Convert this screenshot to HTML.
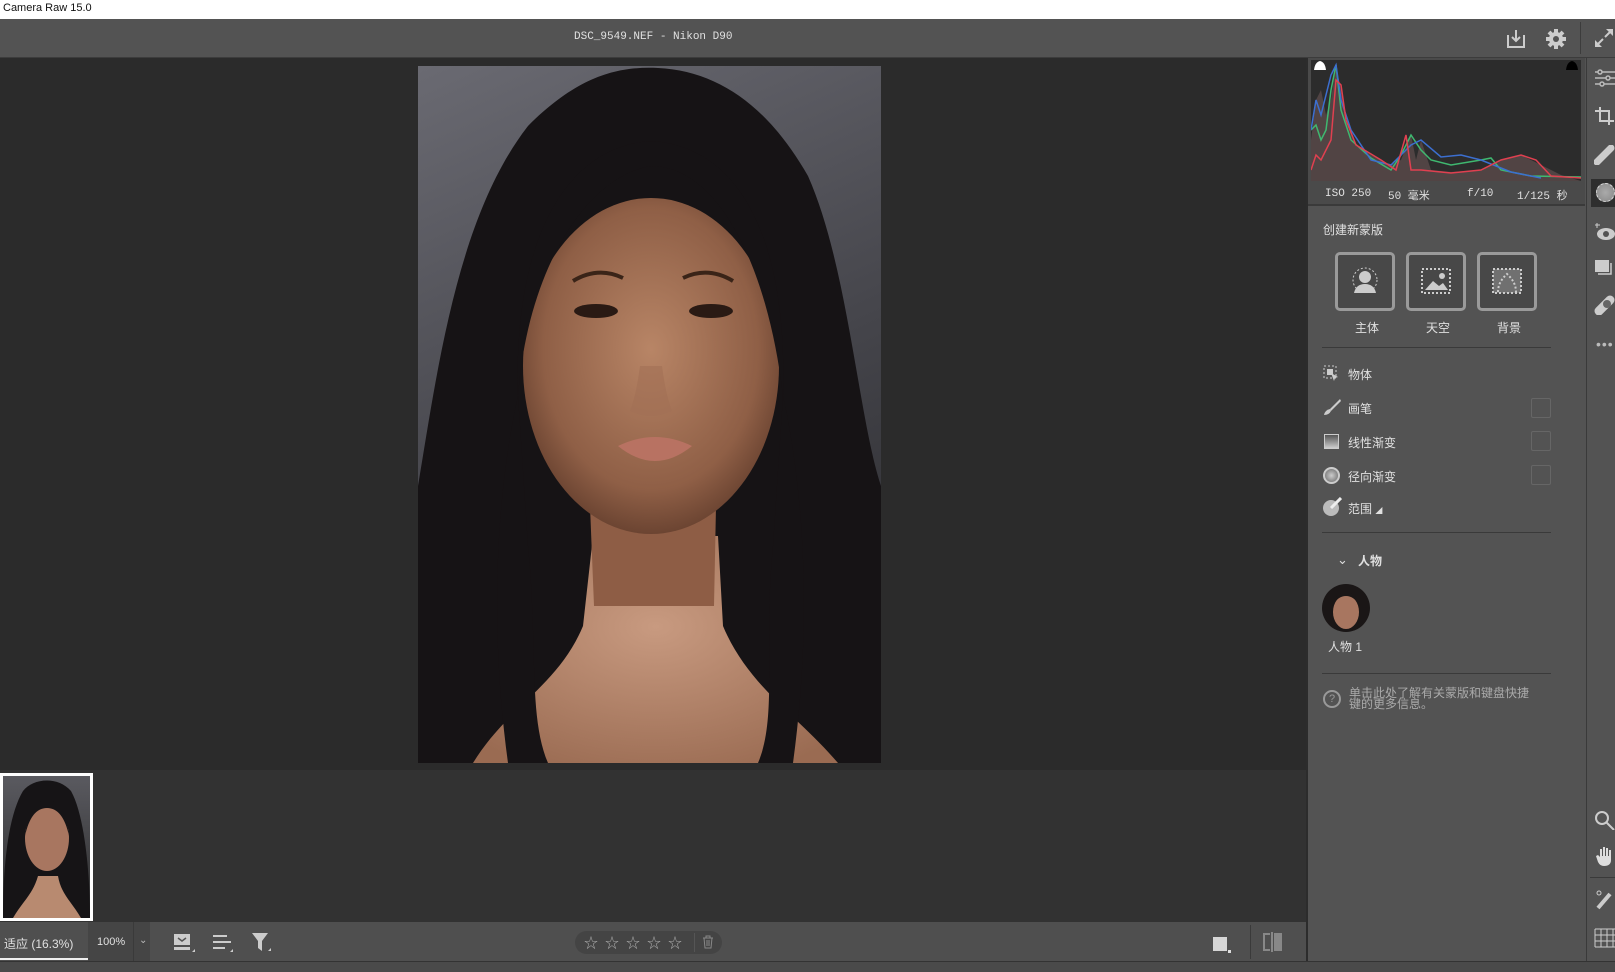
<!DOCTYPE html>
<html><head><meta charset="utf-8">
<style>
*{margin:0;padding:0;box-sizing:border-box}
body{width:1615px;height:972px;overflow:hidden;background:#2b2b2b;font-family:"Liberation Sans","Noto Sans CJK SC",sans-serif;color:#ddd;position:relative}
.a{position:absolute}
.t{font-size:12px;color:#e0e0e0;white-space:nowrap}
.btn{position:absolute;width:60px;height:59px;border:3px solid #9a9a9a;border-radius:5px;background:#484848}
.sc{position:absolute;left:1531px;width:20px;height:20px;border:1px solid #666;border-radius:2px}
.hr{position:absolute;left:1322px;width:229px;height:1px;background:#3a3a3a}
</style></head><body>
<div class="a" style="left:0;top:0;width:1615px;height:19px;background:#fff"></div>
<div class="a t" style="left:3px;top:2px;color:#111;font-size:11px">Camera Raw 15.0</div>
<div class="a" style="left:0;top:19px;width:1615px;height:39px;background:#535353;border-bottom:1px solid #3c3c3c"></div>
<div class="a t" style="left:574px;top:31px;font-family:'Liberation Mono',monospace;font-size:11px">DSC_9549.NEF -  Nikon D90</div>
<svg class="a" style="left:1504px;top:27px" width="24" height="24" viewBox="0 0 24 24" fill="none" stroke="#ccc" stroke-width="2"><path d="M4 8v12h16V8M12 3v11M8 10l4 4 4-4"/></svg>
<svg class="a" style="left:1544px;top:27px" width="24" height="24" viewBox="0 0 24 24"><circle cx="12" cy="12" r="7" fill="#ccc"/><g stroke="#ccc" stroke-width="4"><path d="M12 2v20M2 12h20M5 5l14 14M19 5L5 19"/></g><circle cx="12" cy="12" r="3" fill="#535353"/></svg>
<div class="a" style="left:1580px;top:22px;width:1px;height:32px;background:#3c3c3c"></div>
<svg class="a" style="left:1593px;top:27px" width="22" height="22" viewBox="0 0 22 22" fill="#ccc"><path d="M2 20v-7l7 7zM20 2v7l-7-7z"/><path d="M5 17l5-5M17 5l-5 5" stroke="#ccc" stroke-width="2"/></svg>

<!-- photo -->
<svg class="a" style="left:418px;top:66px" width="463" height="697" viewBox="0 0 463 697">
<defs>
<linearGradient id="bg" x1="0" y1="0" x2="0.3" y2="1"><stop offset="0" stop-color="#6a6a72"/><stop offset="0.6" stop-color="#45454b"/><stop offset="1" stop-color="#2e2e32"/></linearGradient>
<radialGradient id="sk" cx="0.5" cy="0.45" r="0.6"><stop offset="0" stop-color="#b88566"/><stop offset="0.7" stop-color="#8f5f46"/><stop offset="1" stop-color="#5e3a2a"/></radialGradient>
<radialGradient id="ch" cx="0.5" cy="0.4" r="0.7"><stop offset="0" stop-color="#c89a80"/><stop offset="1" stop-color="#9a6b52"/></radialGradient>
</defs>
<rect width="463" height="697" fill="url(#bg)"/>
<path d="M0 697V420C20 300 40 150 110 60 160 10 200 0 240 2 300 5 350 40 390 110 430 200 440 350 463 420V697Z" fill="#161315"/>
<path d="M55 697C90 640 140 620 165 560L175 470 300 470 305 560C330 620 380 650 420 697Z" fill="url(#ch)"/>
<path d="M172 440L298 440 296 540 176 540Z" fill="#8e5d45"/>
<ellipse cx="233" cy="300" rx="128" ry="168" fill="url(#sk)"/>
<path d="M100 330C95 170 150 80 233 75 320 80 370 170 365 330 350 200 300 100 233 100 170 110 110 200 100 330Z" fill="#161315"/>
<path d="M90 697C70 550 80 420 100 330L110 480C120 580 110 650 130 697Z" fill="#161315"/>
<path d="M375 697C395 550 385 420 365 330L355 480C345 580 360 650 340 697Z" fill="#161315"/>
<ellipse cx="178" cy="245" rx="22" ry="7" fill="#2a1a14"/><ellipse cx="293" cy="245" rx="22" ry="7" fill="#2a1a14"/>
<path d="M155 215Q180 200 205 212M265 212Q290 200 315 215" stroke="#3a2418" stroke-width="4" fill="none"/>
<path d="M222 300Q218 330 212 345Q233 355 254 345Q248 330 244 300" fill="#a26f55" opacity="0.6"/>
<path d="M200 380Q237 362 274 380Q237 410 200 380Z" fill="#b87262"/>
</svg>

<!-- filmstrip -->
<div class="a" style="left:0;top:770px;width:1306px;height:152px;background:#323232"></div>
<div class="a" style="left:0;top:773px;width:93px;height:148px;border:3px solid #fff;background:linear-gradient(#5a5a60,#2a2a2a)"></div>
<svg class="a" style="left:3px;top:776px" width="87" height="142" viewBox="0 0 87 142"><path d="M0 142C0 90 5 40 20 15 30 2 55 0 68 15 82 40 87 100 87 142Z" fill="#161416"/><path d="M10 142C20 125 30 118 35 100H55C58 118 68 125 78 142Z" fill="#b88a70"/><ellipse cx="44" cy="62" rx="22" ry="33" fill="#a87660"/><path d="M22 60Q25 25 44 24 63 25 66 60 60 32 44 32 28 32 22 60Z" fill="#161416"/></svg>

<!-- bottom bar -->
<div class="a" style="left:0;top:922px;width:1306px;height:39px;background:#4f4f4f"></div>
<div class="a" style="left:0;top:961px;width:1615px;height:11px;background:#4a4a4a;border-top:1px solid #333"></div>
<div class="a t" style="left:4px;top:935px;font-size:12px">适应 (16.3%)</div>
<div class="a" style="left:0;top:958px;width:88px;height:2px;background:#eee"></div>
<div class="a" style="left:88px;top:922px;width:62px;height:39px;background:#454545"></div>
<div class="a t" style="left:97px;top:936px;font-size:11px">100%</div>
<div class="a" style="left:133px;top:922px;width:1px;height:39px;background:#3a3a3a"></div>
<div class="a t" style="left:139px;top:935px;font-size:10px;color:#bbb">⌄</div>
<svg class="a" style="left:172px;top:932px" width="24" height="22" viewBox="0 0 24 22" fill="#ccc"><rect x="2" y="2" width="16" height="11"/><path d="M6 6l4 3 4-3" stroke="#555" stroke-width="1.5" fill="none"/><rect x="2" y="15" width="16" height="3"/><path d="M20 20h3v-3z"/></svg>
<svg class="a" style="left:211px;top:932px" width="24" height="22" viewBox="0 0 24 22" fill="#ccc"><rect x="2" y="3" width="14" height="2"/><rect x="2" y="9" width="18" height="2"/><rect x="2" y="15" width="12" height="2"/><path d="M19 20h3v-3z"/></svg>
<svg class="a" style="left:251px;top:931px" width="22" height="22" viewBox="0 0 22 22" fill="#ccc"><path d="M1 2h16l-6 8v10l-4-3v-7z"/><path d="M17 20h3v-3z"/></svg>
<div class="a" style="left:575px;top:931px;width:147px;height:23px;border-radius:12px;background:#444"></div>
<div class="a" style="left:584px;top:933px;font-size:14px;color:#aaa;letter-spacing:7px">☆☆☆☆☆</div>
<div class="a" style="left:694px;top:933px;width:1px;height:19px;background:#555"></div>
<svg class="a" style="left:702px;top:935px" width="12" height="14" viewBox="0 0 12 14" fill="none" stroke="#888"><path d="M1 3h10M4 3V1h4v2M2 3l1 10h6l1-10M5 5v6M7 5v6"/></svg>
<div class="a" style="left:1213px;top:937px;width:14px;height:14px;background:#d6d6d6"></div>
<div class="a" style="left:1228px;top:950px;width:3px;height:3px;background:#ddd"></div>
<div class="a" style="left:1250px;top:925px;width:1px;height:34px;background:#3a3a3a"></div>
<div class="a" style="left:1263px;top:933px;width:7px;height:18px;border:2px solid #888;border-right:none"></div>
<div class="a" style="left:1271px;top:932px;width:2px;height:20px;background:#888"></div>
<div class="a" style="left:1274px;top:933px;width:8px;height:18px;background:#888"></div>

<!-- right panel -->
<div class="a" style="left:1306px;top:58px;width:280px;height:903px;background:#535353;border-left:2px solid #2c2c2c"></div>
<div class="a" style="left:1586px;top:58px;width:29px;height:903px;background:#535353;border-left:1px solid #3a3a3a"></div>
<div class="a" style="left:1308px;top:58px;width:277px;height:148px;background:#4a4a4a;border-bottom:2px solid #3a3a3a"></div>
<svg class="a" style="left:1311px;top:60px" width="270" height="121" viewBox="0 0 270 121">
<rect width="270" height="121" fill="#2c2c2c"/>
<path d="M0 121V80L5 40 10 30 15 55 20 40 25 5 30 30 35 60 45 85 60 95 80 105 90 100 100 75 105 100 110 80 120 110 140 112 170 110 190 100 210 95 220 100 250 115 270 121Z" fill="#5b4b4b" opacity="0.8"/>
<path d="M0 70L5 65 10 80 15 70 20 30 25 5 30 50 40 80 60 98 80 110 90 95 100 75 110 90 120 100 140 105 170 100 180 98 190 110 220 116 270 117" stroke="#3fb870" fill="none" stroke-width="1.5"/>
<path d="M0 70L5 40 10 55 15 35 20 15 25 5 30 40 40 70 60 100 80 105 90 95 100 85 110 80 130 97 150 95 170 100 200 112 230 118" stroke="#3c6fd0" fill="none" stroke-width="1.5"/>
<path d="M0 110L5 95 10 100 20 80 25 20 30 25 35 60 45 85 70 100 85 110 95 75 100 110 110 110 140 113 170 110 190 100 210 95 225 100 240 116 270 118" stroke="#e04050" fill="none" stroke-width="1.5"/>
</svg>
<svg class="a" style="left:1313px;top:60px" width="14" height="12"><path d="M1 10Q2 2 7 1 12 2 13 10Z" fill="#fff"/></svg>
<svg class="a" style="left:1565px;top:60px" width="14" height="12"><path d="M1 10Q2 2 7 1 12 2 13 10Z" fill="#000"/></svg>
<div class="a t" style="left:1325px;top:188px;font-size:11px;font-family:'Liberation Mono','Noto Sans CJK SC',monospace">ISO 250</div>
<div class="a t" style="left:1388px;top:187px;font-size:11px;font-family:'Liberation Mono','Noto Sans CJK SC',monospace">50 毫米</div>
<div class="a t" style="left:1467px;top:188px;font-size:11px;font-family:'Liberation Mono',monospace">f/10</div>
<div class="a t" style="left:1517px;top:187px;font-size:11px;font-family:'Liberation Mono','Noto Sans CJK SC',monospace">1/125 秒</div>

<div class="a t" style="left:1323px;top:221px;font-size:12px">创建新蒙版</div>
<div class="btn" style="left:1335px;top:252px"></div>
<div class="btn" style="left:1406px;top:252px"></div>
<div class="btn" style="left:1477px;top:252px"></div>
<svg class="a" style="left:1350px;top:266px" width="30" height="30" viewBox="0 0 30 30"><circle cx="15" cy="11" r="6" fill="#ccc"/><path d="M4 27Q6 18 15 18 24 18 26 27Z" fill="#ccc"/><circle cx="15" cy="14" r="12" fill="none" stroke="#ccc" stroke-dasharray="2 2"/></svg>
<svg class="a" style="left:1421px;top:268px" width="30" height="26" viewBox="0 0 30 26"><rect x="1" y="1" width="28" height="24" fill="none" stroke="#ccc" stroke-width="2" stroke-dasharray="2 2"/><path d="M4 22l8-9 6 5 4-3 5 7z" fill="#ccc"/><circle cx="21" cy="8" r="3" fill="#ccc"/></svg>
<svg class="a" style="left:1492px;top:268px" width="30" height="26" viewBox="0 0 30 26"><rect x="1" y="1" width="28" height="24" fill="#ccc" opacity="0.3"/><rect x="1" y="1" width="28" height="24" fill="none" stroke="#ccc" stroke-width="2" stroke-dasharray="2 2"/><path d="M6 24Q6 14 15 6 24 14 24 24" fill="none" stroke="#ccc" stroke-width="2" stroke-dasharray="2 2"/></svg>
<div class="a t" style="left:1355px;top:319px;font-size:12px">主体</div>
<div class="a t" style="left:1426px;top:319px;font-size:12px">天空</div>
<div class="a t" style="left:1497px;top:319px;font-size:12px">背景</div>
<div class="hr" style="top:347px"></div>

<svg class="a" style="left:1323px;top:365px" width="16" height="16" viewBox="0 0 16 16"><rect x="1" y="1" width="12" height="12" fill="none" stroke="#ccc" stroke-dasharray="2 2"/><rect x="4" y="4" width="6" height="6" fill="#ccc"/><path d="M8 8l7 4-3 1-1 3z" fill="#ccc"/></svg>
<div class="a t" style="left:1348px;top:366px">物体</div>
<svg class="a" style="left:1323px;top:398px" width="18" height="18" viewBox="0 0 18 18"><path d="M17 1L7 11l1 2L18 3z" fill="#ccc"/><path d="M7 11Q2 12 1 17 6 17 8 13z" fill="#ccc"/></svg>
<div class="a t" style="left:1348px;top:400px">画笔</div>
<div class="sc" style="top:398px"></div>
<div class="a" style="left:1324px;top:434px;width:15px;height:15px;border:1px solid #ccc;background:linear-gradient(#555,#ccc)"></div>
<div class="a t" style="left:1348px;top:434px">线性渐变</div>
<div class="sc" style="top:431px"></div>
<div class="a" style="left:1323px;top:467px;width:17px;height:17px;border-radius:50%;border:2px solid #ccc;background:radial-gradient(#ccc,#666)"></div>
<div class="a t" style="left:1348px;top:468px">径向渐变</div>
<div class="sc" style="top:465px"></div>
<svg class="a" style="left:1322px;top:497px" width="20" height="20" viewBox="0 0 20 20"><circle cx="9" cy="11" r="8" fill="#bbb"/><path d="M19 1L9 11" stroke="#eee" stroke-width="3"/></svg>
<div class="a t" style="left:1348px;top:500px">范围 <span style="font-size:7px">◢</span></div>
<div class="hr" style="top:532px"></div>
<div class="a t" style="left:1337px;top:552px;font-size:13px;color:#ddd">⌄</div>
<div class="a t" style="left:1358px;top:552px;font-weight:bold;font-size:12px">人物</div>
<svg class="a" style="left:1322px;top:584px" width="48" height="48" viewBox="0 0 48 48"><circle cx="24" cy="24" r="24" fill="#1a1616"/><ellipse cx="24" cy="28" rx="13" ry="17" fill="#a87660"/><path d="M10 22Q14 8 24 8 34 8 38 22 32 12 24 12 16 12 10 22Z" fill="#1a1616"/></svg>
<div class="a t" style="left:1328px;top:638px">人物 1</div>
<div class="hr" style="top:673px"></div>
<div class="a" style="left:1323px;top:690px;width:18px;height:18px;border:2px solid #999;border-radius:50%;color:#999;font-size:11px;text-align:center;line-height:14px">?</div>
<div class="a" style="left:1349px;top:688px;font-size:12px;color:#aaa;line-height:11px">单击此处了解有关蒙版和键盘快捷<br>键的更多信息。</div>

<!-- rail icons -->
<svg class="a" style="left:1594px;top:68px" width="21" height="20" viewBox="0 0 21 20" fill="none" stroke="#bbb" stroke-width="1.5"><path d="M1 4h20M1 10h20M1 16h20"/><circle cx="6" cy="4" r="2" fill="#535353"/><circle cx="14" cy="10" r="2" fill="#535353"/><circle cx="8" cy="16" r="2" fill="#535353"/></svg>
<svg class="a" style="left:1594px;top:106px" width="21" height="20" viewBox="0 0 21 20" fill="none" stroke="#ccc" stroke-width="2"><path d="M6 1v14h14M1 5h14v14"/></svg>
<svg class="a" style="left:1594px;top:145px" width="21" height="20" viewBox="0 0 21 20"><path d="M3 17L17 3" stroke="#ccc" stroke-width="7" stroke-linecap="round"/></svg>
<div class="a" style="left:1591px;top:179px;width:24px;height:28px;background:#2e2e2e"></div>
<div class="a" style="left:1596px;top:183px;width:19px;height:19px;border-radius:50%;background:radial-gradient(#aaa,#888);border:1px dashed #ddd"></div>
<svg class="a" style="left:1594px;top:222px" width="21" height="20" viewBox="0 0 21 20"><ellipse cx="12" cy="12" rx="9" ry="6" fill="#ccc"/><circle cx="12" cy="12" r="3" fill="#535353"/><path d="M3 1v5M1 3h5" stroke="#ccc"/></svg>
<svg class="a" style="left:1594px;top:258px" width="21" height="20" viewBox="0 0 21 20"><rect x="1" y="2" width="14" height="12" fill="#ccc"/><path d="M17 5v11H4" stroke="#ccc" fill="none" stroke-width="1.5"/></svg>
<svg class="a" style="left:1594px;top:295px" width="21" height="20" viewBox="0 0 21 20"><path d="M5 16L16 5" stroke="#ccc" stroke-width="9" stroke-linecap="round"/><circle cx="13" cy="9" r="4" fill="#666"/></svg>
<div class="a" style="left:1596px;top:336px;font-size:14px;color:#bbb;letter-spacing:1px">•••</div>
<svg class="a" style="left:1594px;top:810px" width="21" height="20" viewBox="0 0 21 20" fill="none" stroke="#ccc" stroke-width="2"><circle cx="8" cy="8" r="6"/><path d="M12 12l8 8"/></svg>
<svg class="a" style="left:1594px;top:845px" width="21" height="22" viewBox="0 0 21 22" fill="#ddd"><path d="M6 12V4h2v7h1V2h2v9h1V3h2v8h1V5h2v10q0 6-7 6-4 0-6-4L2 11l2-1z"/></svg>
<div class="a" style="left:1590px;top:877px;width:25px;height:1px;background:#3a3a3a"></div>
<svg class="a" style="left:1594px;top:888px" width="21" height="22" viewBox="0 0 21 22"><path d="M4 20L16 6" stroke="#ccc" stroke-width="4"/><circle cx="5" cy="5" r="2" fill="none" stroke="#ccc"/></svg>
<svg class="a" style="left:1594px;top:928px" width="21" height="21" viewBox="0 0 21 21" fill="none" stroke="#ccc"><path d="M1 1h20M1 7h20M1 13h20M1 19h20M1 1v18M7 1v18M13 1v18M19 1v18"/></svg>
</body></html>
